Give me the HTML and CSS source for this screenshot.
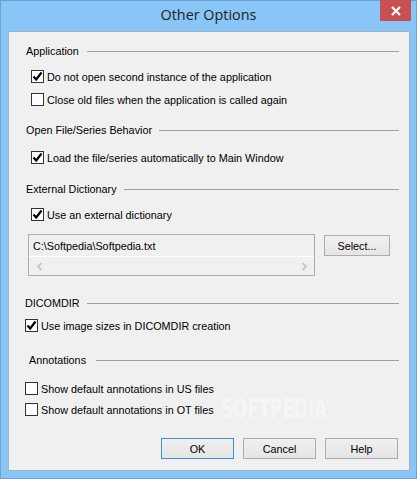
FILE: index.html
```html
<!DOCTYPE html>
<html>
<head>
<meta charset="utf-8">
<link rel="stylesheet" href="styles.css">
</head>
<body>
<div class="window">
  <div class="titlebar">
    <div class="title">Other Options</div>
    <div class="close">
      <svg width="12" height="10" viewBox="0 0 12 10"><path d="M2 1 L10 9 M10 1 L2 9" stroke="#fff" stroke-width="2.2"/></svg>
    </div>
  </div>
  <div class="client">
    <div class="watermark">SOFTPEDIA</div>
    <div class="header h1"><span class="label">Application</span><span class="line"></span></div>
    <div class="cb cb1 in1"><span class="box checked"><svg width="11" height="11" viewBox="0 0 11 11"><path d="M1.5 5.5 L4.2 8.5 L9.5 1.5" fill="none" stroke="#000" stroke-width="2.2"/></svg></span><span>Do not open second instance of the application</span></div>
    <div class="cb cb2 in1"><span class="box"></span><span>Close old files when the application is called again</span></div>

    <div class="header h2"><span class="label">Open File/Series Behavior</span><span class="line"></span></div>
    <div class="cb cb3 in1"><span class="box checked"><svg width="11" height="11" viewBox="0 0 11 11"><path d="M1.5 5.5 L4.2 8.5 L9.5 1.5" fill="none" stroke="#000" stroke-width="2.2"/></svg></span><span>Load the file/series automatically to Main Window</span></div>

    <div class="header h3"><span class="label">External Dictionary</span><span class="line"></span></div>
    <div class="cb cb4 in1"><span class="box checked"><svg width="11" height="11" viewBox="0 0 11 11"><path d="M1.5 5.5 L4.2 8.5 L9.5 1.5" fill="none" stroke="#000" stroke-width="2.2"/></svg></span><span>Use an external dictionary</span></div>
    <div class="dictrow">
      <div class="textbox">
        <div class="tbtext">C:\Softpedia\Softpedia.txt</div>
        <div class="hscroll">
          <svg width="8" height="9" viewBox="0 0 8 9"><path d="M5.5 1 L2 4.5 L5.5 8" fill="none" stroke="#c8c8c8" stroke-width="2"/></svg>
          <svg width="8" height="9" viewBox="0 0 8 9"><path d="M2.5 1 L6 4.5 L2.5 8" fill="none" stroke="#c8c8c8" stroke-width="2"/></svg>
        </div>
      </div>
      <div class="btn select">Select...</div>
    </div>

    <div class="header h4"><span class="label">DICOMDIR</span><span class="line"></span></div>
    <div class="cb cb5 in2"><span class="box checked"><svg width="11" height="11" viewBox="0 0 11 11"><path d="M1.5 5.5 L4.2 8.5 L9.5 1.5" fill="none" stroke="#000" stroke-width="2.2"/></svg></span><span>Use image sizes in DICOMDIR creation</span></div>

    <div class="header h5"><span class="label">Annotations</span><span class="line"></span></div>
    <div class="cb cb6 in2"><span class="box"></span><span>Show default annotations in US files</span></div>
    <div class="cb cb7 in2"><span class="box"></span><span>Show default annotations in OT files</span></div>

    <div class="buttons">
      <div class="btn ok">OK</div>
      <div class="btn">Cancel</div>
      <div class="btn">Help</div>
    </div>
  </div>
</div>
</body>
</html>
```

FILE: styles.css
```css
* { box-sizing: border-box; }
html, body { margin: 0; padding: 0; }
body {
  width: 417px;
  height: 479px;
  overflow: hidden;
  font-family: "Liberation Sans", Arial, sans-serif;
  font-size: 10.8px;
  color: #000;
}
.window {
  width: 417px;
  height: 479px;
  background: #8ac5f8;
  border: 1px solid #6d9fcf;
  display: flex;
  flex-direction: column;
  position: relative;
}
.titlebar {
  height: 30px;
  display: flex;
  justify-content: center;
  align-items: center;
  position: relative;
}
.title {
  font-family: "Open Sans", "Noto Sans", sans-serif;
  font-size: 14.4px;
  color: #222;
  margin-top: -3px;
}
.close {
  position: absolute;
  top: -1px;
  right: 5px;
  width: 31px;
  height: 21px;
  background: #c75050;
  display: flex;
  align-items: center;
  justify-content: center;
}
.client {
  margin: 0 6px 0 7px;
  height: 440px;
  background: #f0f0f0;
  border: 1px solid #9fb4c8;
  position: relative;
  padding-top: 11px;
}
.header {
  display: flex;
  align-items: center;
  height: 16px;
  padding-right: 10px;
  position: relative;
}
.header .line {
  flex: 1;
  height: 1px;
  background: #a0a0a0;
  margin-left: 7px;
}
.h1 { padding-left: 17px; }
.h2 { padding-left: 17px; margin-top: 16px; }
.h3 { padding-left: 17px; margin-top: 17px; }
.h4 { padding-left: 16px; margin-top: 19px; }
.h5 { padding-left: 20px; margin-top: 20px; }
.h1 .line { margin-left: 8px; }
.h4 .line { margin-left: 7px; }
.h5 .line { margin-left: 10px; }

.cb {
  display: flex;
  align-items: center;
  height: 13px;
  white-space: nowrap;
  position: relative;
}
.in1 { padding-left: 22px; }
.in2 { padding-left: 16px; }
.box {
  width: 13px;
  height: 13px;
  border: 1px solid #333;
  background: #fff;
  margin-right: 3px;
  display: flex;
  align-items: center;
  justify-content: center;
  flex: none;
}
.cb1 { margin-top: 11px; }
.cb2 { margin-top: 10px; }
.cb3 { margin-top: 13px; }
.cb4 { margin-top: 11px; }
.cb5 { margin-top: 8px; }
.cb6 { margin-top: 14px; }
.cb7 { margin-top: 8px; }

.dictrow {
  display: flex;
  margin-top: 13px;
  padding-left: 19px;
  gap: 9px;
  align-items: flex-start;
}
.textbox {
  width: 287px;
  height: 42px;
  border: 1px solid #abadb3;
  background: #f0f0f0;
  display: flex;
  flex-direction: column;
}
.tbtext {
  height: 22px;
  display: flex;
  align-items: center;
  padding-left: 4px;
  border-bottom: 1px solid #fff;
}
.hscroll {
  flex: 1;
  display: flex;
  justify-content: space-between;
  align-items: center;
  padding: 0 6px 0 7px;
}
.btn {
  width: 73px;
  height: 21px;
  border: 1px solid #acacac;
  background: linear-gradient(#f0f0f0, #e5e5e5);
  display: flex;
  align-items: center;
  justify-content: center;
}
.select {
  width: 66px;
  margin-top: 1px;
}
.ok {
  border-color: #3c8ee0;
}
.buttons {
  display: flex;
  justify-content: flex-end;
  gap: 9px;
  margin-top: 22px;
  padding-right: 11px;
}
.watermark {
  position: absolute;
  left: 212px;
  top: 361px;
  font-family: "DejaVu Sans", sans-serif;
  font-weight: bold;
  font-size: 27px;
  color: rgba(255,255,255,0.45);
  transform: scaleX(0.62);
  transform-origin: left top;
  pointer-events: none;
}
```
